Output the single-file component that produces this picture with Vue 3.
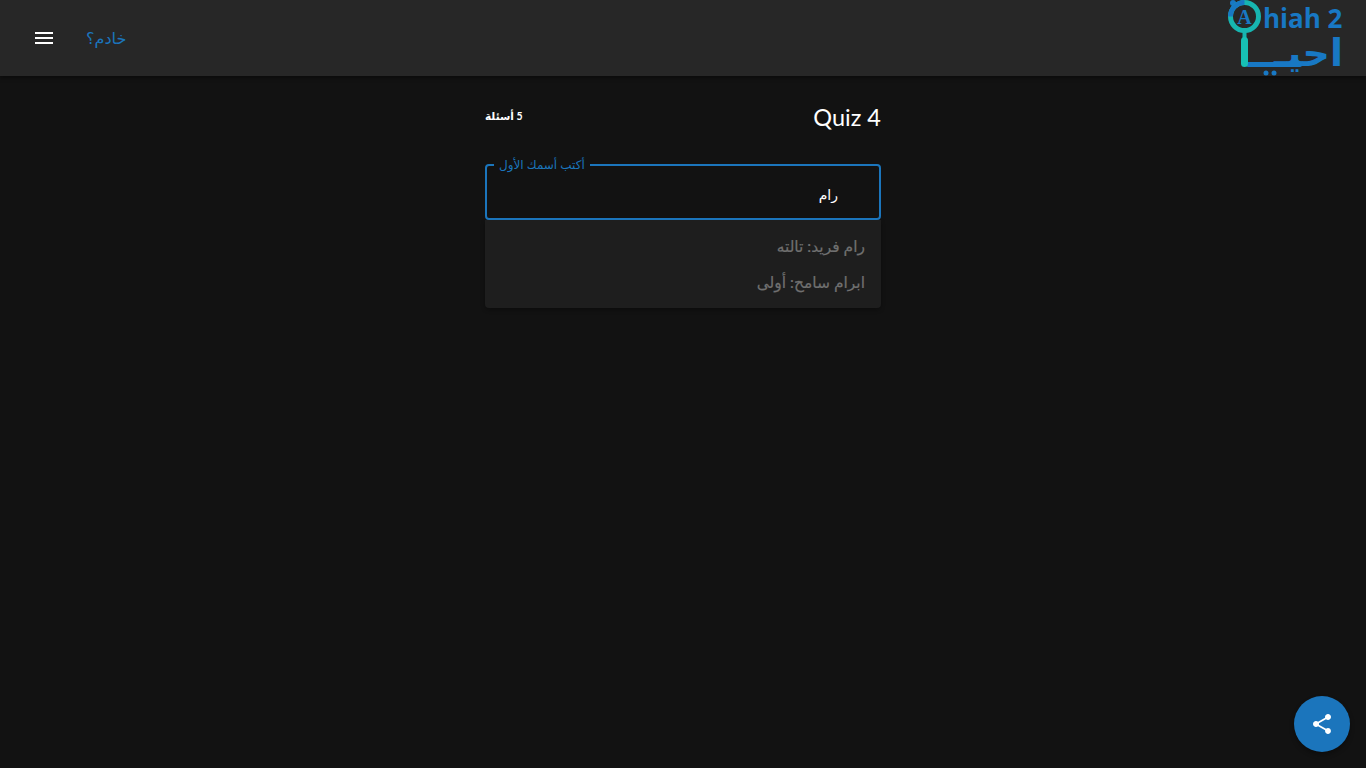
<template>
  <div class="page">
    <header class="topbar">
      <button class="menu-btn" aria-label="menu">
        <svg viewBox="0 0 24 24" width="24" height="24"><path d="M3 18h18v-2H3v2zm0-5h18v-2H3v2zm0-7v2h18V6H3z" fill="#fff" /></svg>
      </button>
      <a class="servant-link">خادم؟</a>
      <svg class="logo" viewBox="0 0 120 76" width="120" height="76">
        <circle cx="7" cy="3" r="3" fill="#1878c4" />
        <circle cx="18.5" cy="16.5" r="14" fill="none" stroke="#17b5b0" stroke-width="5" />
        <path d="M4.5 16.5A14 14 0 0 1 18.5 2.5" fill="none" stroke="#1878c4" stroke-width="5" />
        <text x="18.5" y="24" text-anchor="middle" class="logo-a">A</text>
        <text x="37" y="28" class="logo-latin">hiah 2</text>
        <text x="117" y="66" text-anchor="start" direction="rtl" class="logo-ar">احيـ</text>
        <rect x="20" y="62" width="56" height="5" rx="2" fill="#1878c4" />
        <circle cx="40" cy="73" r="2.5" fill="#1878c4" />
        <circle cx="48" cy="73" r="2.5" fill="#1878c4" />
        <rect x="16.5" y="31" width="4" height="7" fill="#17b5b0" />
        <rect x="15" y="37" width="7" height="30" rx="3.5" fill="#17c0b4" />
      </svg>
    </header>

    <main class="content">
      <div class="quiz">
        <div class="quiz-head">
          <h1>Quiz 4</h1>
          <span class="count" dir="rtl">5 أسئلة</span>
        </div>

        <div class="field">
          <input type="text" :value="name" dir="rtl" />
          <fieldset>
            <legend>أكتب أسمك الأول</legend>
          </fieldset>
        </div>

        <ul class="options">
          <li v-for="o in options" :key="o">{{ o }}</li>
        </ul>
      </div>
    </main>

    <button class="share" aria-label="share">
      <svg viewBox="0 0 24 24" width="24" height="24"><path d="M18 16.08c-.76 0-1.44.3-1.96.77L8.91 12.7c.05-.23.09-.46.09-.7s-.04-.47-.09-.7l7.05-4.11c.54.5 1.25.81 2.04.81 1.66 0 3-1.34 3-3s-1.34-3-3-3-3 1.34-3 3c0 .24.04.47.09.7L8.04 9.81C7.5 9.31 6.79 9 6 9c-1.66 0-3 1.34-3 3s1.34 3 3 3c.79 0 1.5-.31 2.04-.81l7.12 4.16c-.05.21-.08.43-.08.65 0 1.61 1.31 2.92 2.92 2.92s2.92-1.31 2.92-2.92-1.31-2.92-2.92-2.92z" fill="#fff" /></svg>
    </button>
  </div>
</template>

<script setup>
import { ref } from 'vue';

const name = ref('رام');
const options = ['رام فريد: تالته', 'ابرام سامح: أولى'];
</script>

<style>
html, body {
  margin: 0;
  background: #121212;
}
</style>

<style scoped>
.page {
  position: relative;
  height: 768px;
  overflow: hidden;
  background: #121212;
  color: #fff;
  font-family: Lato, Roboto, "Noto Sans", "DejaVu Sans", sans-serif;
}

.topbar {
  display: flex;
  align-items: center;
  height: 76px;
  padding: 0 20px 0 32px;
  box-sizing: border-box;
  background: #272727;
  box-shadow: 0 2px 4px rgba(0, 0, 0, 0.4);
}

.menu-btn {
  display: flex;
  padding: 0;
  border: 0;
  background: none;
}

.servant-link {
  margin-left: 30px;
  font-size: 16px;
  line-height: 20px;
  color: #1b75bc;
}

.logo {
  margin-left: auto;
}

.logo-a {
  font: 700 20px "Liberation Serif", serif;
  fill: #1878c4;
}

.logo-latin {
  font: 700 26px "Open Sans", sans-serif;
  fill: #1878c4;
}

.logo-ar {
  font: 700 38px "DejaVu Sans", sans-serif;
  fill: #1878c4;
}

.content {
  display: flex;
  justify-content: center;
}

.quiz {
  width: 396px;
  padding-top: 25px;
}

.quiz-head {
  display: flex;
  flex-direction: row-reverse;
  justify-content: space-between;
  align-items: flex-start;
  margin-bottom: 31px;
}

.quiz-head h1 {
  margin: 0;
  font-size: 23.5px;
  font-weight: 400;
  line-height: 32px;
}

.count {
  font-size: 10.5px;
  font-weight: 700;
  line-height: 30px;
}

.field {
  position: relative;
  height: 56px;
}

.field input {
  display: block;
  width: 100%;
  height: 56px;
  box-sizing: border-box;
  padding: 4px 43px 0 14px;
  border: 0;
  outline: 0;
  background: transparent;
  color: #fff;
  font: 14px Lato, Roboto, "DejaVu Sans", sans-serif;
}

.field fieldset {
  position: absolute;
  inset: -4px 0 0;
  margin: 0;
  padding: 0 7px;
  border: 2px solid #1b75bc;
  border-radius: 4px;
  pointer-events: none;
}

.field legend {
  padding: 0 5px;
  font-size: 12px;
  line-height: 10px;
  color: #1b75bc;
}

.options {
  margin: 0;
  padding: 8px 0;
  list-style: none;
  border-radius: 0 0 4px 4px;
  background: #1e1e1e;
  box-shadow: 0 2px 4px rgba(0, 0, 0, 0.3);
}

.options li {
  height: 36px;
  padding: 0 16px;
  font-size: 15.5px;
  line-height: 36px;
  text-align: right;
  direction: rtl;
  color: #707070;
  -webkit-text-stroke: 0.2px #707070;
}

.share {
  position: absolute;
  right: 16px;
  bottom: 16px;
  display: flex;
  align-items: center;
  justify-content: center;
  width: 56px;
  height: 56px;
  padding: 0;
  border: 0;
  border-radius: 50%;
  background: #1b75bc;
  box-shadow: 0 3px 5px rgba(0, 0, 0, 0.3);
}
</style>
